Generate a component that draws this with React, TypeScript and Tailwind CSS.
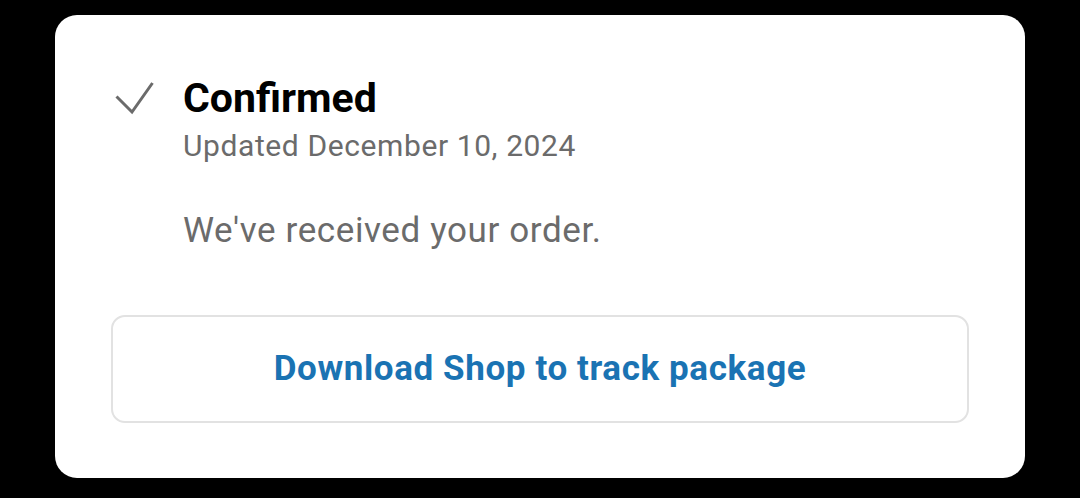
export default function App() {
  return (
    <div
      className="min-h-screen w-full bg-black pt-[15px] pl-[55px]"
      style={{ fontFamily: "Roboto, 'Liberation Sans', sans-serif" }}
    >
      <div className="w-[970px] h-[463px] bg-white rounded-[22px] pt-[59px] px-[56px]">
        <div className="flex items-start pl-[4px]">
          <svg
            width="40"
            height="36"
            viewBox="0 0 40 36"
            fill="none"
            className="mt-[6px] shrink-0"
          >
            <path
              d="M1.5 16.5 L17 32 L37.5 3"
              stroke="#6b6b6b"
              strokeWidth="3"
              strokeLinecap="butt"
              strokeLinejoin="miter"
            />
          </svg>
          <div className="ml-[28px] flex flex-col">
            <h1 className="text-[41px] leading-[48px] font-bold text-black">Confirmed</h1>
            <p className="mt-[7px] text-[30px] leading-[34px] tracking-[0.6px] text-[#6b6b6b]">
              Updated December 10, 2024
            </p>
            <p className="mt-[48px] text-[35px] leading-[40px] tracking-[0.6px] text-[#6b6b6b]">
              We've received your order.
            </p>
          </div>
        </div>
        <button className="mt-[64px] w-full h-[108px] rounded-[14px] border-2 border-[#e2e2e2] bg-white flex items-center justify-center">
          <span className="text-[35px] leading-[40px] font-bold tracking-[0.6px] text-[#1a73b3]">
            Download Shop to track package
          </span>
        </button>
      </div>
    </div>
  );
}
